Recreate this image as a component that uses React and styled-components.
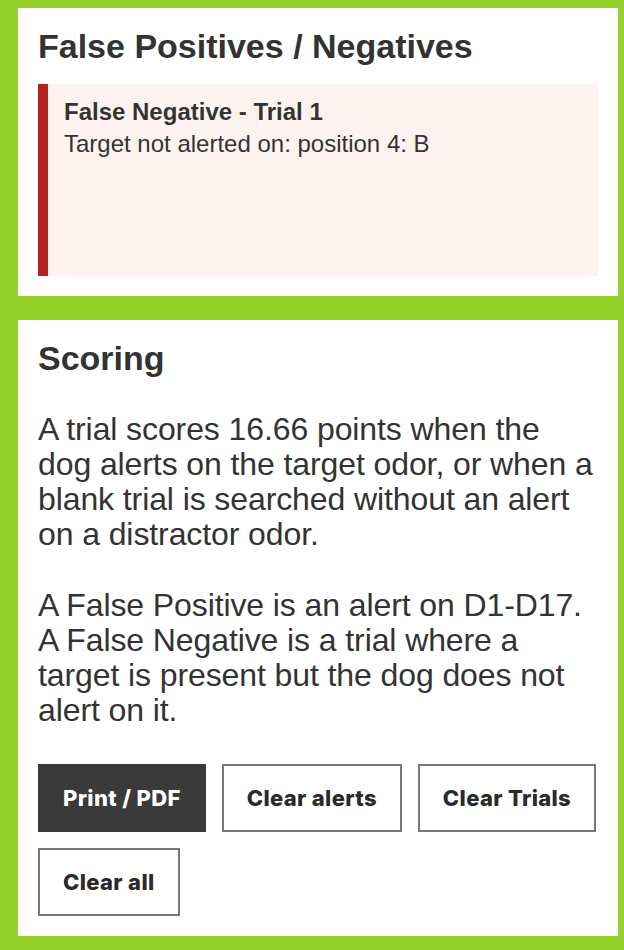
import React from 'react';
import styled, { createGlobalStyle } from 'styled-components';

const GlobalStyle = createGlobalStyle`
    body {
        margin: 0;
        background: #94d22b;
        font-family: 'Liberation Sans', Arial, Helvetica, sans-serif;
        color: #333333;
    }
`

const Page = styled.div`
    display: flex;
    flex-direction: column;
    gap: 24px;
    padding: 8px 6px 14px 18px;
`

const Card = styled.section`
    background: #ffffff;
    padding: 18px 20px 20px;
`

const Title = styled.h2`
    margin: 0;
    font-size: 34px;
    line-height: 1.2;
    font-weight: 700;
    color: #333333;
`

const Alert = styled.div`
    box-sizing: border-box;
    margin-top: 17px;
    min-height: 192px;
    padding: 12px 16px;
    background: #fff3f1;
    border-left: 10px solid #b22222;
    font-size: 24px;
    line-height: 32px;
    color: #333333;
`

const AlertTitle = styled.div`
    font-weight: 700;
`

const Text = styled.p`
    margin: 0;
    font-size: 32px;
    line-height: 35px;
    letter-spacing: -0.1px;
    & + & {
        margin-top: 36px;
    }
`

const Body = styled.div`
    margin-top: 33px;
`

const Actions = styled.div`
    display: flex;
    flex-wrap: wrap;
    gap: 16px;
    margin-top: 36px;
`

const Button = styled.button`
    box-sizing: border-box;
    height: 68px;
    padding: 0 23px;
    font-family: Inter, 'Liberation Sans', sans-serif;
    font-size: 22px;
    font-weight: 800;
    letter-spacing: 0.35px;
    cursor: pointer;
    background: ${props => props.dark ? '#3a3a3a' : '#ffffff'};
    color: ${props => props.dark ? '#ffffff' : '#2a2a2a'};
    border: 2px solid ${props => props.dark ? '#3a3a3a' : '#777777'};
    border-radius: 0;
`

function App() {
    return (
        <>
            <GlobalStyle />
            <Page>
                <Card>
                    <Title>False Positives / Negatives</Title>
                    <Alert>
                        <AlertTitle>False Negative - Trial 1</AlertTitle>
                        <div>Target not alerted on: position 4: B</div>
                    </Alert>
                </Card>
                <Card>
                    <Title>Scoring</Title>
                    <Body>
                        <Text>
                            A trial scores 16.66 points when the dog alerts on the target odor, or when a blank trial is searched without an alert on a distractor odor.
                        </Text>
                        <Text>
                            A False Positive is an alert on D1-D17. A False Negative is a trial where a target is present but the dog does not alert on it.
                        </Text>
                    </Body>
                    <Actions>
                        <Button dark>Print / PDF</Button>
                        <Button>Clear alerts</Button>
                        <Button>Clear Trials</Button>
                        <Button>Clear all</Button>
                    </Actions>
                </Card>
            </Page>
        </>
    )
}

export default App
